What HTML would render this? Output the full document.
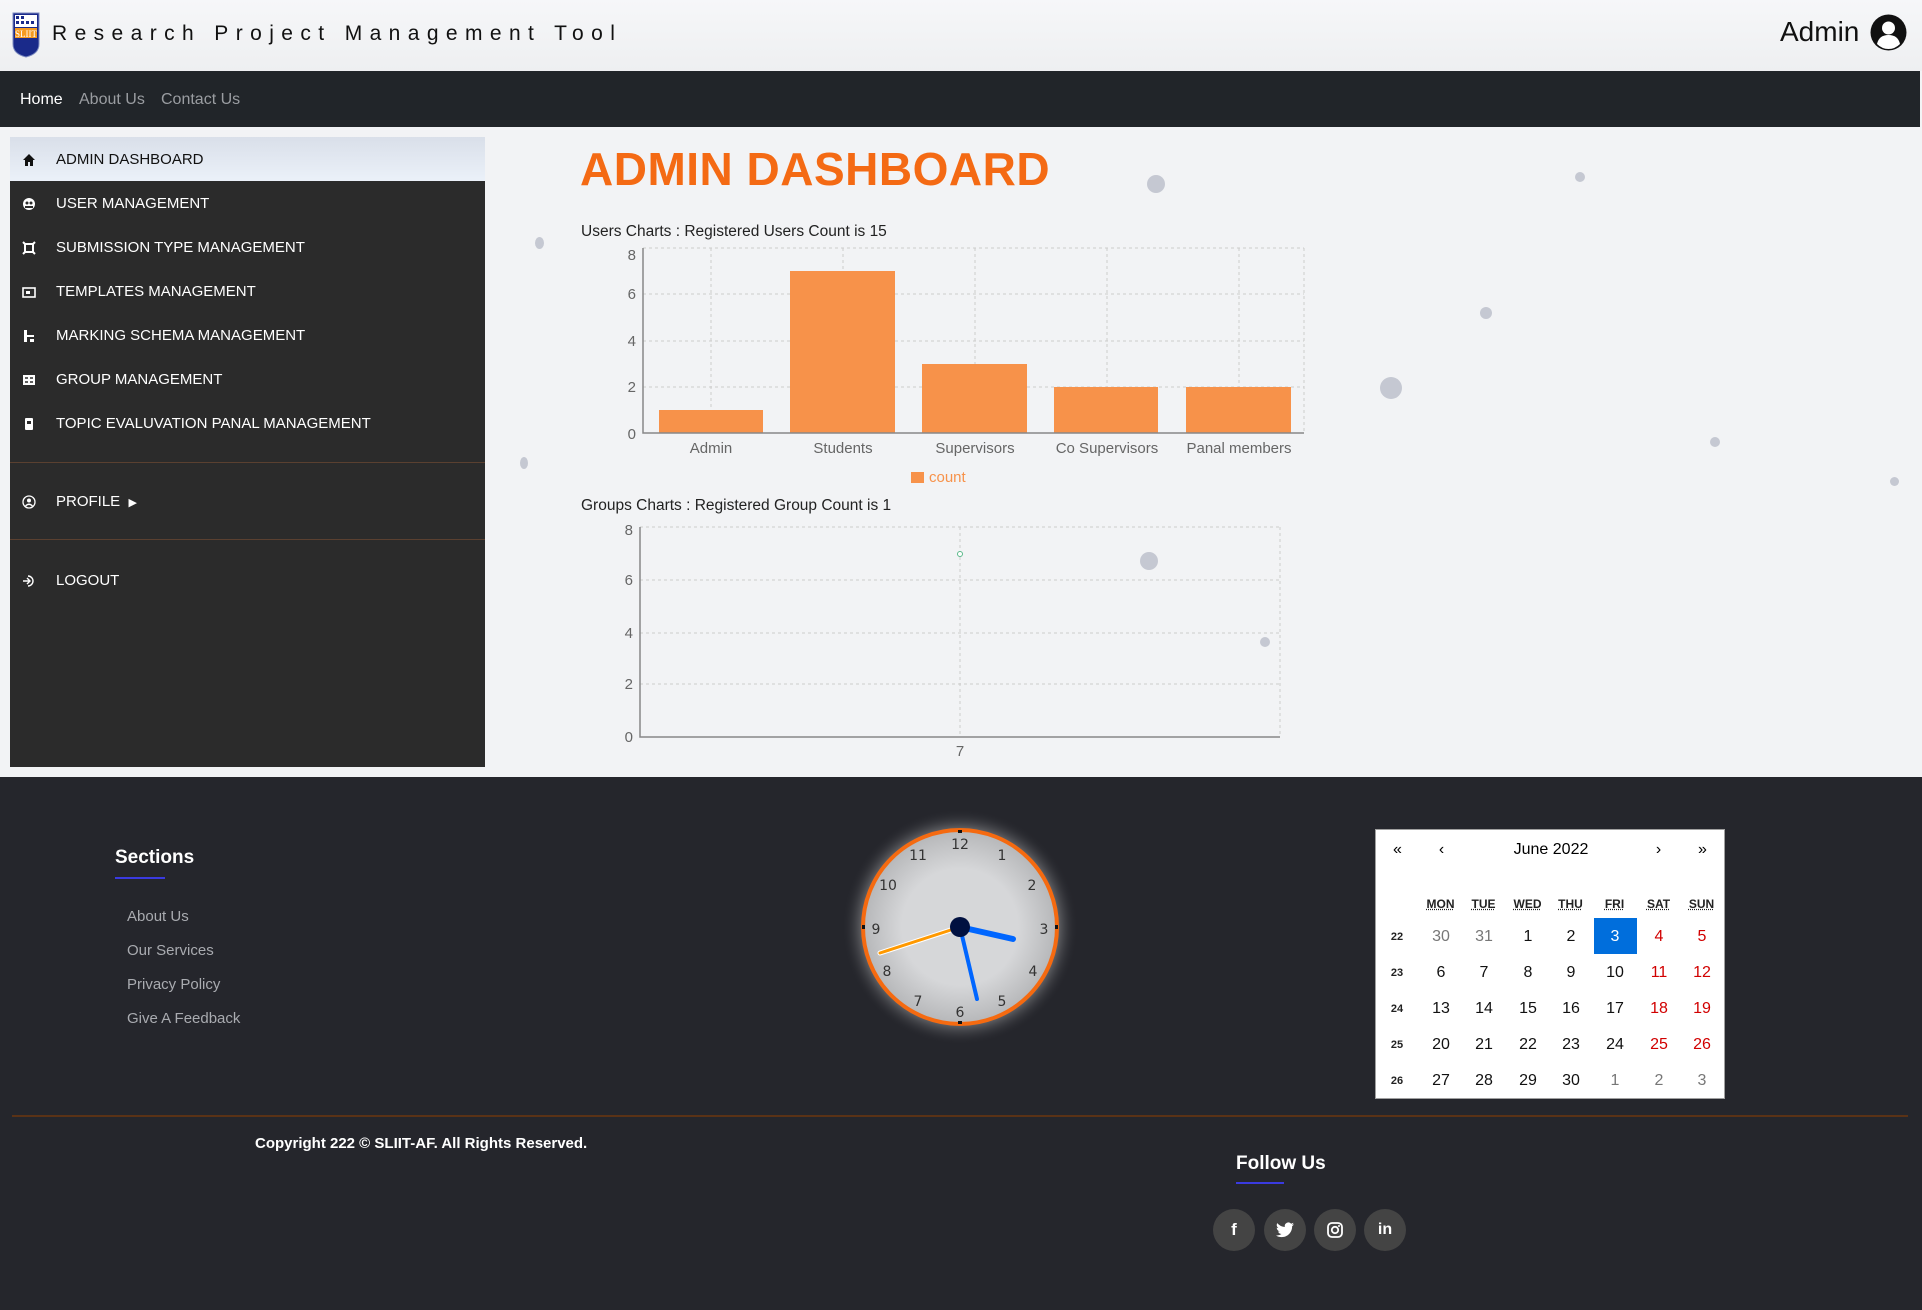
<!DOCTYPE html>
<html><head><meta charset="utf-8">
<style>
*{margin:0;padding:0;box-sizing:border-box}
body{width:1922px;height:1310px;overflow:hidden;font-family:"Liberation Sans",sans-serif;background:#f3f4f6;position:relative}
.abs{position:absolute}
#hdr{left:0;top:0;width:1922px;height:71px;background:linear-gradient(#f6f7f9,#eeeff1)}
#nav{left:0;top:71px;width:1920px;height:56px;background:#212529}
#nav span{position:absolute;top:20px;font-size:16px;color:#9a9da1}
#main{left:0;top:127px;width:1922px;height:650px;background:#f2f3f5}
#side{left:10px;top:137px;width:475px;height:630px;background:#2b2b2b}
.it{position:absolute;left:0;width:475px;height:44px;color:#fff;font-size:15px}
.it .t{position:absolute;left:46px;top:14px}
.it .i{position:absolute;left:12px;top:16px;width:14px;height:14px}
#foot{left:0;top:777px;width:1922px;height:533px;background:#25262c}
.fl{position:absolute;left:127px;color:#a9abb0;font-size:15px}
.soc{position:absolute;top:1209px;width:42px;height:42px;border-radius:50%;background:#444;color:#fff;font-weight:bold;text-align:center;line-height:42px;font-size:17px}
.dot{position:absolute;border-radius:50%;background:#c5c8d2}
#cal{left:1375px;top:829px;width:350px;height:270px;background:#fff;border:1px solid #a0a0a0;font-size:16px}
#cal div{position:absolute;width:43px;text-align:center}
</style></head><body>
<div id="hdr" class="abs">
  <svg class="abs" style="left:12px;top:12px" width="28" height="46" viewBox="0 0 28 46">
    <path d="M1 1H27V32Q27 42 14 45Q1 42 1 32Z" fill="#1a2a8a" stroke="#7d8bc0"/>
    <rect x="3" y="3" width="22" height="12" fill="#fff"/>
    <g fill="#1a2a8a"><rect x="4" y="4" width="3" height="3"/><rect x="9" y="4" width="3" height="3"/><rect x="4" y="9" width="3" height="3"/><rect x="9" y="9" width="3" height="3"/><rect x="14" y="9" width="3" height="3"/><rect x="19" y="9" width="3" height="3"/></g>
    <rect x="3" y="16" width="22" height="10" fill="#f59a1f"/>
    <text x="14" y="25" font-size="9" fill="#fff" text-anchor="middle" font-family="Liberation Serif">SLIIT</text>
  </svg>
  <div class="abs" style="left:52px;top:22px;font-size:21px;letter-spacing:7.4px;color:#111">Research Project Management Tool</div>
  <div class="abs" style="left:1780px;top:16px;font-size:28px;color:#111">Admin</div>
  <svg class="abs" style="left:1870px;top:14px" width="37" height="37" viewBox="0 0 37 37"><circle cx="18.5" cy="18.5" r="18" fill="#111"/><circle cx="18.5" cy="14" r="6.5" fill="#fff"/><path d="M7 30Q9 21 18.5 21Q28 21 30 30Q25 35 18.5 35Q12 35 7 30Z" fill="#fff"/></svg>
</div>
<div id="nav" class="abs"><span style="left:20px;color:#fff">Home</span><span style="left:79px">About Us</span><span style="left:161px">Contact Us</span></div>
<div id="main" class="abs">
  <div class="dot" style="left:535px;top:110px;width:9px;height:12px"></div>
  <div class="dot" style="left:1147px;top:48px;width:18px;height:18px"></div>
  <div class="dot" style="left:1380px;top:250px;width:22px;height:22px"></div>
  <div class="dot" style="left:1575px;top:45px;width:10px;height:10px"></div>
  <div class="dot" style="left:1140px;top:425px;width:18px;height:18px"></div>
  <div class="dot" style="left:1710px;top:310px;width:10px;height:10px"></div>
  <div class="dot" style="left:1480px;top:180px;width:12px;height:12px"></div>
  <div class="dot" style="left:1890px;top:350px;width:9px;height:9px"></div>
  <div class="dot" style="left:520px;top:330px;width:8px;height:12px"></div>
  <div class="dot" style="left:1260px;top:510px;width:10px;height:10px"></div>
</div>
<div id="side" class="abs">
  <div class="it" style="top:0;background:linear-gradient(#d9dfe9,#ebf1f9);color:#111"><svg class="i" viewBox="0 0 14 14"><path d="M7 1L1 7H3V13H6V9H8V13H11V7H13Z" fill="#111"/></svg><span class="t">ADMIN DASHBOARD</span></div>
  <div class="it" style="top:44px"><svg class="i" viewBox="0 0 14 14"><circle cx="7" cy="7" r="6" fill="#fff"/><circle cx="5" cy="6" r="1.5" fill="#2b2b2b"/><circle cx="9" cy="6" r="1.5" fill="#2b2b2b"/><rect x="3" y="9" width="8" height="2" fill="#2b2b2b"/></svg><span class="t">USER MANAGEMENT</span></div>
  <div class="it" style="top:88px"><svg class="i" viewBox="0 0 14 14"><rect x="3" y="3" width="8" height="8" fill="none" stroke="#fff" stroke-width="2"/><path d="M1 1L4 4M13 1L10 4M1 13L4 10M13 13L10 10" stroke="#fff" stroke-width="2"/></svg><span class="t">SUBMISSION TYPE MANAGEMENT</span></div>
  <div class="it" style="top:132px"><svg class="i" viewBox="0 0 14 14"><rect x="1" y="3" width="12" height="9" fill="none" stroke="#fff" stroke-width="1.6"/><rect x="4" y="6" width="4" height="3" fill="#fff"/></svg><span class="t">TEMPLATES MANAGEMENT</span></div>
  <div class="it" style="top:176px"><svg class="i" viewBox="0 0 14 14"><rect x="2" y="1" width="3" height="12" fill="#fff"/><rect x="5" y="6" width="7" height="2" fill="#fff"/><rect x="8" y="10" width="4" height="3" fill="#fff"/></svg><span class="t">MARKING SCHEMA MANAGEMENT</span></div>
  <div class="it" style="top:220px"><svg class="i" viewBox="0 0 14 14"><rect x="1" y="2" width="12" height="10" fill="#fff"/><path d="M3 5H6M8 5H11M3 9H6M8 9H11" stroke="#2b2b2b" stroke-width="1.5"/></svg><span class="t">GROUP MANAGEMENT</span></div>
  <div class="it" style="top:264px"><svg class="i" viewBox="0 0 14 14"><rect x="3" y="1" width="8" height="12" rx="1" fill="#fff"/><rect x="5" y="4" width="4" height="3" fill="#2b2b2b"/></svg><span class="t">TOPIC EVALUVATION PANAL MANAGEMENT</span></div>
  <div class="abs" style="left:0;top:325px;width:475px;height:1px;background:#5a4030"></div>
  <div class="it" style="top:342px"><svg class="i" viewBox="0 0 14 14"><circle cx="7" cy="7" r="6" fill="none" stroke="#fff" stroke-width="1.3"/><circle cx="7" cy="5.5" r="2" fill="#fff"/><path d="M3.5 11Q7 7.5 10.5 11" stroke="#fff" stroke-width="1.3" fill="none"/></svg><span class="t">PROFILE &nbsp;<span style="font-size:11px">&#9654;</span></span></div>
  <div class="abs" style="left:0;top:402px;width:475px;height:1px;background:#5a4030"></div>
  <div class="it" style="top:421px"><svg class="i" viewBox="0 0 14 14"><path d="M6 2A5 5 0 1 1 6 12" fill="none" stroke="#fff" stroke-width="1.4"/><path d="M1 7H8M5 4L8 7L5 10" fill="none" stroke="#fff" stroke-width="1.4"/></svg><span class="t">LOGOUT</span></div>
</div>
<div class="abs" style="left:580px;top:142px;font-size:46px;font-weight:bold;color:#f46a14;letter-spacing:0.5px">ADMIN DASHBOARD</div>
<div class="abs" style="left:581px;top:223px;font-size:15.5px;color:#222">Users Charts : Registered Users Count is 15</div>
<svg class="abs" style="left:600px;top:240px" width="720" height="250" viewBox="600 240 720 250" font-family="Liberation Sans" font-size="15">
  <g stroke="#ccc" stroke-dasharray="3,3" fill="none">
    <path d="M643 248H1304M643 294H1304M643 341H1304M643 387H1304"/>
    <path d="M711 248V433M843 248V433M975 248V433M1107 248V433M1239 248V433M1304 248V433"/>
  </g>
  <g fill="#f7924a"><rect x="659" y="410" width="104" height="23"/><rect x="790" y="271" width="105" height="162"/><rect x="922" y="364" width="105" height="69"/><rect x="1054" y="387" width="104" height="46"/><rect x="1186" y="387" width="105" height="46"/></g>
  <path d="M643 248V433H1304" stroke="#888" stroke-width="1.5" fill="none"/>
  <g fill="#666" text-anchor="end"><text x="636" y="260">8</text><text x="636" y="299">6</text><text x="636" y="346">4</text><text x="636" y="392">2</text><text x="636" y="439">0</text></g>
  <g fill="#666" text-anchor="middle"><text x="711" y="453">Admin</text><text x="843" y="453">Students</text><text x="975" y="453">Supervisors</text><text x="1107" y="453">Co Supervisors</text><text x="1239" y="453">Panal members</text></g>
  <rect x="911" y="472" width="13" height="11" fill="#f7924a"/><text x="929" y="482" fill="#f7924a">count</text>
</svg>
<div class="abs" style="left:581px;top:497px;font-size:15.5px;color:#222">Groups Charts : Registered Group Count is 1</div>
<svg class="abs" style="left:600px;top:515px" width="700" height="250" viewBox="600 515 700 250" font-family="Liberation Sans" font-size="15">
  <g stroke="#ccc" stroke-dasharray="3,3" fill="none"><path d="M640 527H1280M640 580H1280M640 633H1280M640 684H1280M960 527V737M1280 527V737"/></g>
  <path d="M640 527V737H1280" stroke="#888" stroke-width="1.5" fill="none"/>
  <g fill="#666" text-anchor="end"><text x="633" y="535">8</text><text x="633" y="585">6</text><text x="633" y="638">4</text><text x="633" y="689">2</text><text x="633" y="742">0</text></g>
  <text x="960" y="756" fill="#666" text-anchor="middle">7</text>
  <circle cx="960" cy="554" r="2.5" fill="#fff" stroke="#5ab88a"/>
</svg>
<div id="foot" class="abs"></div>
<div class="abs" style="left:115px;top:847px;font-size:19px;font-weight:bold;color:#fff">Sections</div>
<div class="abs" style="left:115px;top:877px;width:50px;height:2px;background:#3a3ae0"></div>
<div class="fl" style="top:908px">About Us</div><div class="fl" style="top:942px">Our Services</div><div class="fl" style="top:976px">Privacy Policy</div><div class="fl" style="top:1010px">Give A Feedback</div>
<svg class="abs" style="left:840px;top:807px" width="240" height="240" viewBox="840 807 240 240" font-family="DejaVu Sans" font-size="14" fill="#333">
  <defs><radialGradient id="g"><stop offset="0.6" stop-color="#d6d7d9"/><stop offset="1" stop-color="#b6b7b9"/></radialGradient><radialGradient id="sh"><stop offset="0.8" stop-color="#ccc" stop-opacity="0.5"/><stop offset="1" stop-color="#25262c" stop-opacity="0"/></radialGradient></defs>
  <circle cx="960" cy="927" r="118" fill="url(#sh)"/>
  <circle cx="960" cy="927" r="97" fill="url(#g)" stroke="#f56a10" stroke-width="4"/>
  <g text-anchor="middle"><text x="960" y="849">12</text><text x="1002" y="860">1</text><text x="1032" y="890">2</text><text x="1044" y="934">3</text><text x="1033" y="976">4</text><text x="1002" y="1006">5</text><text x="960" y="1017">6</text><text x="918" y="1006">7</text><text x="887" y="976">8</text><text x="876" y="934">9</text><text x="888" y="890">10</text><text x="918" y="860">11</text></g>
  <g fill="#111"><rect x="958" y="830" width="4" height="3"/><rect x="958" y="1021" width="4" height="3"/><rect x="862" y="925" width="3" height="4"/><rect x="1055" y="925" width="3" height="4"/></g>
  <line x1="960" y1="927" x2="880" y2="953" stroke="#fff" stroke-width="5" stroke-linecap="round"/>
  <line x1="960" y1="927" x2="880" y2="953" stroke="#f90" stroke-width="3" stroke-linecap="round"/>
  <line x1="960" y1="927" x2="977" y2="999" stroke="#06f" stroke-width="4" stroke-linecap="round"/>
  <line x1="960" y1="927" x2="1013" y2="939" stroke="#06f" stroke-width="6" stroke-linecap="round"/>
  <circle cx="960" cy="927" r="10" fill="#001040"/>
</svg>
<div id="cal" class="abs">
  <div style="left:0;top:11px">«</div><div style="left:44px;top:11px">‹</div><div style="left:90px;top:11px;width:170px">June 2022</div><div style="left:261px;top:11px">›</div><div style="left:305px;top:11px">»</div>
  <div style="top:67px;left:43px;font-size:12px;font-weight:bold;color:#222"><u style="text-decoration:underline dotted">MON</u></div>
  <div style="top:67px;left:86px;font-size:12px;font-weight:bold;color:#222"><u style="text-decoration:underline dotted">TUE</u></div>
  <div style="top:67px;left:130px;font-size:12px;font-weight:bold;color:#222"><u style="text-decoration:underline dotted">WED</u></div>
  <div style="top:67px;left:173px;font-size:12px;font-weight:bold;color:#222"><u style="text-decoration:underline dotted">THU</u></div>
  <div style="top:67px;left:217px;font-size:12px;font-weight:bold;color:#222"><u style="text-decoration:underline dotted">FRI</u></div>
  <div style="top:67px;left:261px;font-size:12px;font-weight:bold;color:#222"><u style="text-decoration:underline dotted">SAT</u></div>
  <div style="top:67px;left:304px;font-size:12px;font-weight:bold;color:#222"><u style="text-decoration:underline dotted">SUN</u></div>
  <div style="left:218px;top:88px;height:36px;background:#006edc"></div>
</div>
<svg class="abs" style="left:1375px;top:829px" width="350" height="270" viewBox="1375 829 350 270" font-family="Liberation Sans" font-size="16" text-anchor="middle">
  <g font-size="11" font-weight="bold" fill="#222"><text x="1397" y="940">22</text><text x="1397" y="976">23</text><text x="1397" y="1012">24</text><text x="1397" y="1048">25</text><text x="1397" y="1084">26</text></g>
  <g fill="#111">
   <text x="1441" y="941" fill="#777">30</text><text x="1484" y="941" fill="#777">31</text><text x="1528" y="941">1</text><text x="1571" y="941">2</text><text x="1615" y="941" fill="#fff">3</text><text x="1659" y="941" fill="#d10000">4</text><text x="1702" y="941" fill="#d10000">5</text>
   <text x="1441" y="977">6</text><text x="1484" y="977">7</text><text x="1528" y="977">8</text><text x="1571" y="977">9</text><text x="1615" y="977">10</text><text x="1659" y="977" fill="#d10000">11</text><text x="1702" y="977" fill="#d10000">12</text>
   <text x="1441" y="1013">13</text><text x="1484" y="1013">14</text><text x="1528" y="1013">15</text><text x="1571" y="1013">16</text><text x="1615" y="1013">17</text><text x="1659" y="1013" fill="#d10000">18</text><text x="1702" y="1013" fill="#d10000">19</text>
   <text x="1441" y="1049">20</text><text x="1484" y="1049">21</text><text x="1528" y="1049">22</text><text x="1571" y="1049">23</text><text x="1615" y="1049">24</text><text x="1659" y="1049" fill="#d10000">25</text><text x="1702" y="1049" fill="#d10000">26</text>
   <text x="1441" y="1085">27</text><text x="1484" y="1085">28</text><text x="1528" y="1085">29</text><text x="1571" y="1085">30</text><text x="1615" y="1085" fill="#777">1</text><text x="1659" y="1085" fill="#777">2</text><text x="1702" y="1085" fill="#777">3</text>
  </g>
</svg>
<div class="abs" style="left:12px;top:1115px;width:1896px;height:2px;background:#5a3216"></div>
<div class="abs" style="left:255px;top:1135px;font-size:15px;font-weight:bold;color:#fff">Copyright 222 © SLIIT-AF. All Rights Reserved.</div>
<div class="abs" style="left:1236px;top:1153px;font-size:19px;font-weight:bold;color:#fff">Follow Us</div>
<div class="abs" style="left:1236px;top:1182px;width:48px;height:2px;background:#3a3ae0"></div>
<div class="soc" style="left:1213px">f</div>
<div class="soc" style="left:1264px"><svg width="18" height="16" viewBox="0 0 24 20" style="margin-top:13px"><path d="M24 2.4a10 10 0 0 1-2.8.8A5 5 0 0 0 23.3.4a10 10 0 0 1-3.1 1.2A4.9 4.9 0 0 0 11.8 6 14 14 0 0 1 1.7.9a4.9 4.9 0 0 0 1.5 6.6A4.9 4.9 0 0 1 1 6.9a4.9 4.9 0 0 0 3.9 4.9 5 5 0 0 1-2.2.1 4.9 4.9 0 0 0 4.6 3.4A9.9 9.9 0 0 1 0 17.300 14 14 0 0 0 7.5 19.5c9 0 14-7.5 14-14v-.6A10 10 0 0 0 24 2.4z" fill="#fff"/></svg></div>
<div class="soc" style="left:1314px"><svg width="16" height="16" viewBox="0 0 16 16" style="margin-top:13px"><rect x="1" y="1" width="14" height="14" rx="4" fill="none" stroke="#fff" stroke-width="1.8"/><circle cx="8" cy="8" r="3.2" fill="none" stroke="#fff" stroke-width="1.8"/><circle cx="12" cy="4" r="1" fill="#fff"/></svg></div>
<div class="soc" style="left:1364px;font-size:16px">in</div>
</body></html>
